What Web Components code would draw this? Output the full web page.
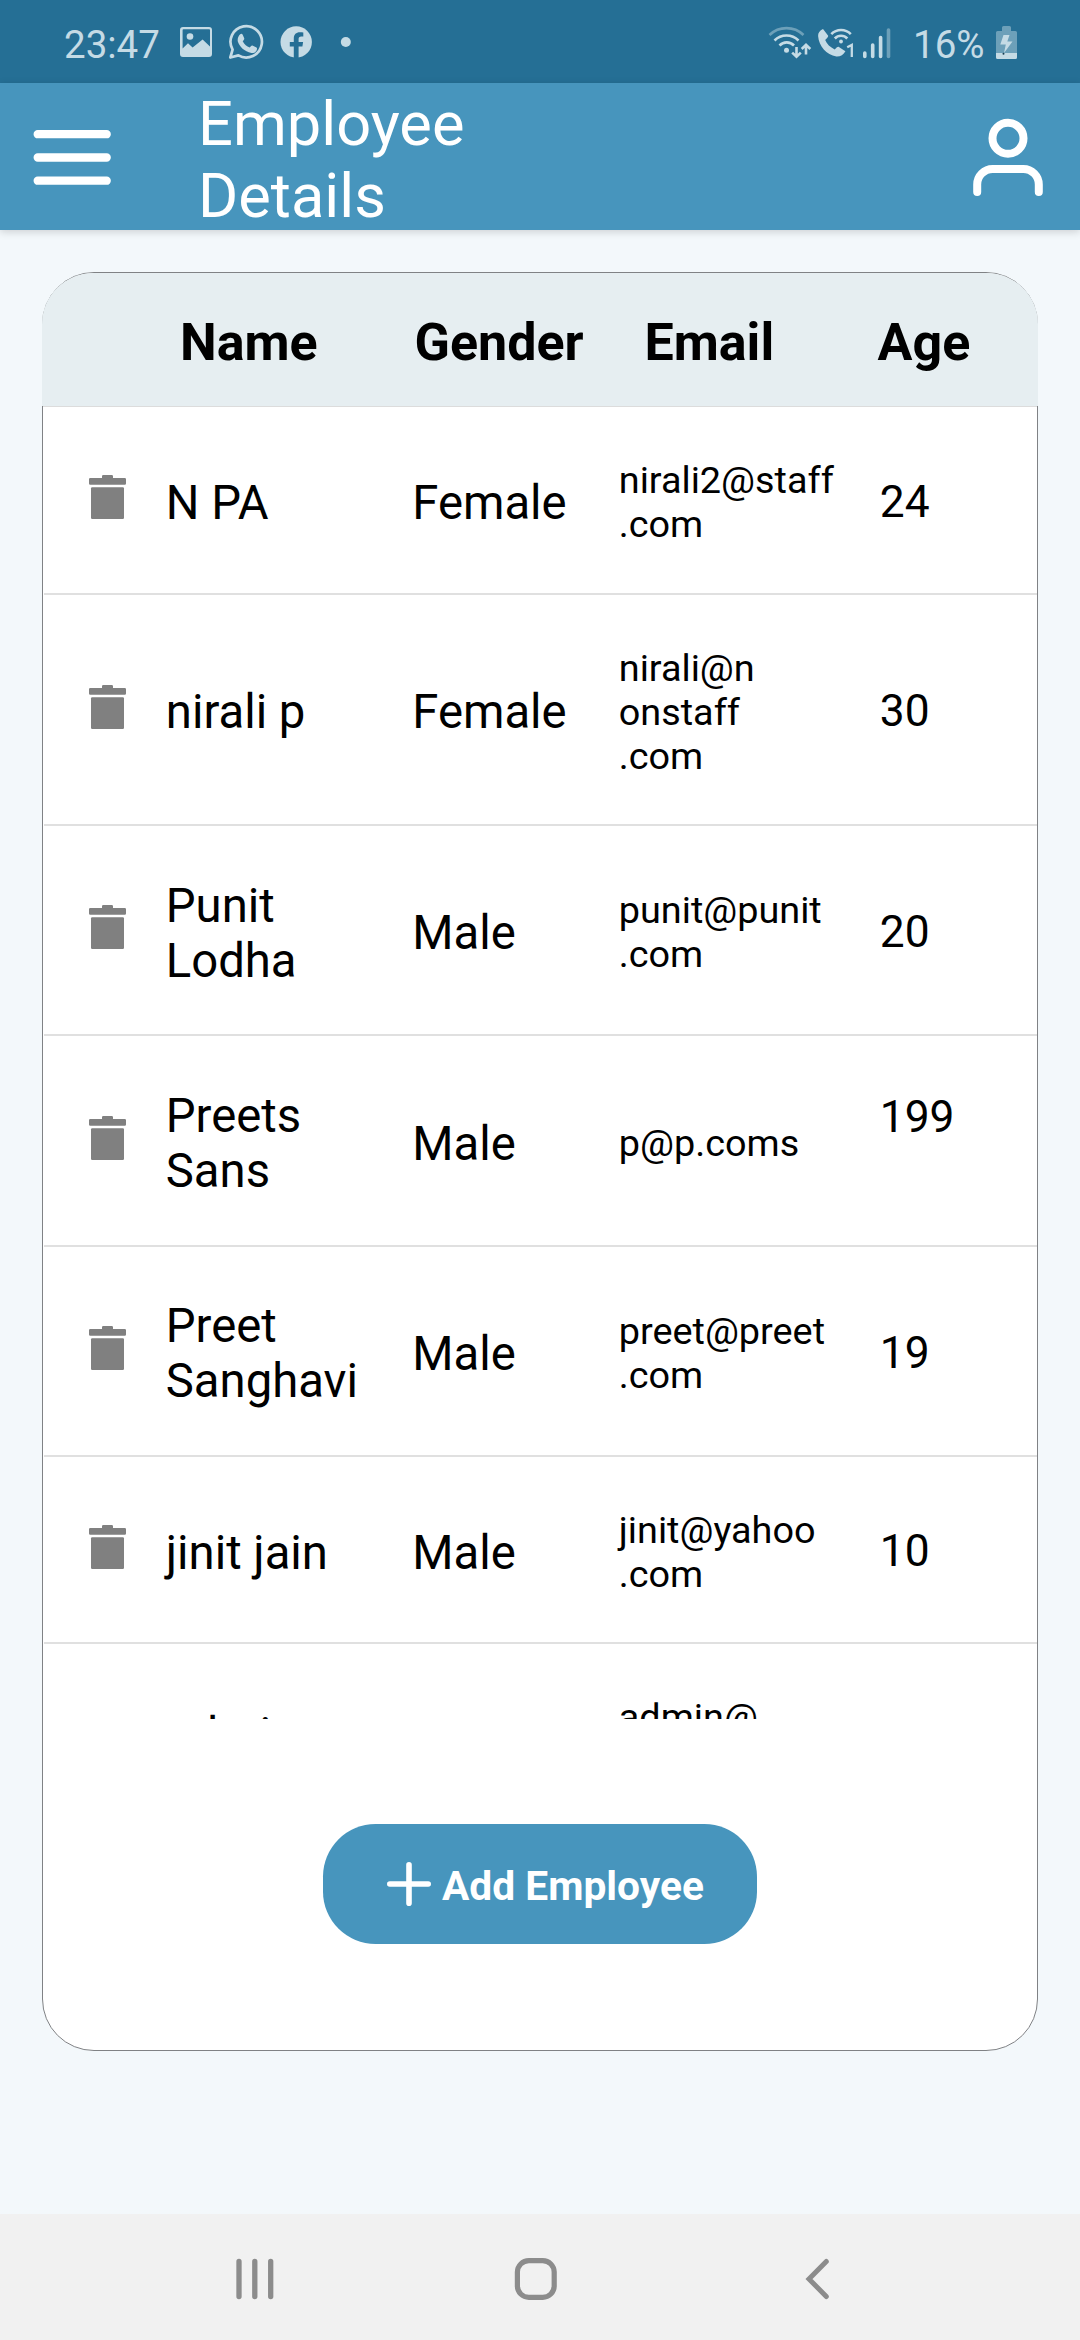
<!DOCTYPE html>
<html lang="en">
<head>
<meta charset="utf-8">
<title>Employee Details</title>
<style>
  html, body { margin: 0; background: #f3f8fb; }
  body { font-family: Roboto, "Liberation Sans", sans-serif; color: #000; }
</style>
</head>
<body>
<phone-screen>
  <status-bar slot="status" time="23:47" battery="16%"></status-bar>
  <app-bar slot="bar">Employee<br>Details</app-bar>
  <employee-card>
    <table-head slot="head"><span>Name</span><span>Gender</span><span>Email</span><span>Age</span></table-head>
    <employee-row><span slot="name">N PA</span><span slot="gender">Female</span><span slot="email">nirali2@staff<br>.com</span><span slot="age">24</span></employee-row>
    <employee-row><span slot="name">nirali p</span><span slot="gender">Female</span><span slot="email">nirali@n<br>onstaff<br>.com</span><span slot="age">30</span></employee-row>
    <employee-row><span slot="name">Punit<br>Lodha</span><span slot="gender">Male</span><span slot="email">punit@punit<br>.com</span><span slot="age">20</span></employee-row>
    <employee-row><span slot="name">Preets<br>Sans</span><span slot="gender">Male</span><span slot="email">p@p.coms</span><span slot="age">199<br>&nbsp;</span></employee-row>
    <employee-row><span slot="name">Preet<br>Sanghavi</span><span slot="gender">Male</span><span slot="email">preet@preet<br>.com</span><span slot="age">19</span></employee-row>
    <employee-row><span slot="name">jinit jain</span><span slot="gender">Male</span><span slot="email">jinit@yahoo<br>.com</span><span slot="age">10</span></employee-row>
    <employee-row><span slot="name">admin<br>&nbsp;</span><span slot="email">admin@<br>&nbsp;<br>&nbsp;</span></employee-row>
    <add-button slot="action">Add Employee</add-button>
  </employee-card>
  <nav-bar slot="nav"></nav-bar>
</phone-screen>
<script>
const define = (name, html) => {
  const tpl = document.createElement('template');
  tpl.innerHTML = html;
  customElements.define(name, class extends HTMLElement {
    constructor() {
      super();
      this.attachShadow({ mode: 'open' }).append(tpl.content.cloneNode(true));
    }
    connectedCallback() {
      this.shadowRoot.querySelectorAll('[data-attr]').forEach(el => {
        el.textContent = this.getAttribute(el.dataset.attr);
      });
    }
  });
};

define('phone-screen', `
<style>
  :host { display: flex; flex-direction: column; width: 1080px; height: 2340px; overflow: hidden; background: #f3f8fb; }
  main { flex: 1; min-height: 0; padding: 42px 42px 0; }
</style>
<slot name="status"></slot><slot name="bar"></slot>
<main><slot></slot></main>
<slot name="nav"></slot>`);

define('status-bar', `
<style>
  :host { display: flex; align-items: flex-start; height: 83px; flex: none; background: #256f95; color: #c5dbe5; font-size: 38.5px; line-height: 45px; box-sizing: border-box; padding: 22px 63px 0 64px; }
  .time { width: 116px; }
  .pct { width: 83px; }
  svg { display: block; flex: none; margin-top: -2px; }
  .gap { flex: 1; }
</style>
<span class="time" data-attr="time"></span>
<svg width="172" height="44" viewBox="180 20 172 44">
  <path fill="#c5dbe5" fill-rule="evenodd" d="M183 27h26a3 3 0 0 1 3 3v24a3 3 0 0 1-3 3h-26a3 3 0 0 1-3-3V30a3 3 0 0 1 3-3zM182.600 30v18.500l5.400-5.300 4.600 4.400 10-8 7.400 7V30a.8.8 0 0 0-.8-.8h-25.800a.8.8 0 0 0-.8.8z"/>
  <circle cx="190" cy="36.500" r="3.300" fill="#c5dbe5"/>
  <path d="M230.300 57.500 232.600 49.600A15.700 15.700 0 1 1 238.400 55.400Z" fill="none" stroke="#c5dbe5" stroke-width="2.700" stroke-linejoin="round"/>
  <path fill="#c5dbe5" d="M240.200 34.200c1-.9 2-.6 2.500.5l1.500 3.500c.3.800-.1 1.300-1.500 3 1.800 3.300 4 5 7 6.300 1.300-1.600 1.900-2.300 2.700-2l4.100 2c.7.400.6 1.500.2 2.700-.8 2.200-3.300 2.900-5.200 2.700-7.200-1.200-12-6.500-13.600-11.200-.8-3 .6-6 2.300-7.500z"/>
  <circle cx="296.200" cy="42" r="15.700" fill="#c5dbe5"/>
  <path fill="#256f95" d="M293.800 58V46.600h-4V42h4v-3.500c0-4 2.400-6.200 6-6.200 1.400 0 2.600.2 3.500.3v3.900h-2c-2 0-2.700 1.200-2.700 2.500v3h4.500l-.7 4.600h-3.800V58z"/>
  <circle cx="345.800" cy="42" r="5" fill="#c5dbe5"/>
</svg>
<span class="gap"></span>
<svg width="145" height="44" viewBox="768 20 145 44" fill="none" stroke="#c5dbe5" stroke-width="2.600">
  <path d="M769.500 35a24.500 24.500 0 0 1 34 0" opacity=".45"/>
  <path d="M774.500 40.500a17 17 0 0 1 24 0M779.500 45.500a10 10 0 0 1 14.500 0"/>
  <circle cx="786.500" cy="50.300" r="2.500" fill="#c5dbe5" stroke="none"/>
  <path d="M796.500 47v9M792.200 52.600l4.300 4.200 4.300-4.200M806 54.500v-9.500M801.700 49l4.300-4.200 4.300 4.200"/>
  <path fill="#c5dbe5" stroke="none" d="M823 29l5 6.500c.4.800.2 1.500-2.800 4.500 1.500 4 5 7.200 9.500 9.500 2.500-2.500 3.300-3 4.200-2.500l6.500 4.200c-2 3.500-5 5.500-9 5.300-10-1.500-17.500-10.500-18.300-20.500-.2-3 1.600-5.500 4.900-7z"/>
  <path d="M831.300 34.200a13.500 13.500 0 0 1 19.500 0M834.800 38.500a8.500 8.500 0 0 1 12.500 0"/>
  <circle cx="841" cy="41.500" r="1.900" fill="#c5dbe5" stroke="none"/>
  <path d="M847.200 47.300l4.600-2.400V57" stroke-width="2.300"/>
  <g stroke-width="3.600" stroke-linecap="round"><path d="M864.800 53v3.500M872.700 45v11.500M880.600 37.500v19"/><path d="M888.500 30v26.500" opacity=".45"/></g>
</svg>
<span class="pct" data-attr="battery"></span>
<svg width="21" height="44" viewBox="996 20 21 44" fill="#c5dbe5">
  <path opacity=".45" d="M1002 31v-3.500a1.500 1.500 0 0 1 1.500-1.500h6a1.500 1.500 0 0 1 1.500 1.500V31h4.500a1.500 1.500 0 0 1 1.500 1.500V53h-21V32.500a1.500 1.500 0 0 1 1.500-1.500z"/>
  <path d="M996 53h21v4.500a1.500 1.500 0 0 1-1.500 1.500h-18a1.500 1.500 0 0 1-1.500-1.500zM1003.500 35h6l-2.200 6.500h5.200L1004 53l1.800-8.500h-5.500z"/>
  <circle cx="1003.500" cy="53.700" r="1" fill="#183e52"/>
</svg>`);

define('app-bar', `
<style>
  :host { display: flex; height: 147px; flex: none; background: #4795bd; color: #fff; box-shadow: 0 2px 8px rgba(0,0,0,.16); box-sizing: border-box; padding: 0 36px 0 32px; align-items: center; }
  h1 { margin: 7px 0 0 86px; font-weight: 400; font-size: 61.4px; line-height: 72px; flex: 1; }
  svg { display: block; flex: none; }
</style>
<svg width="80" height="60" viewBox="32 127 80 60" fill="none" stroke="#fff" stroke-width="8.300" stroke-linecap="round"><path d="M37.700 134.200h69M37.700 157.500h69M37.700 180.700h69"/></svg>
<h1><slot></slot></h1>
<svg width="72" height="80" viewBox="972 117 72 80" fill="none" stroke="#fff" stroke-width="8" stroke-linecap="round"><circle cx="1008" cy="138.300" r="15.500"/><path d="M977.200 192v-7.500a15.500 15.500 0 0 1 15.500-15.500h30.600a15.500 15.500 0 0 1 15.500 15.500V192"/></svg>`);

define('employee-card', `
<style>
  :host { display: flex; flex-direction: column; width: 996px; height: 1779px; box-sizing: border-box; border: 1px solid #808285; border-radius: 52px; background: #fff; }
  .list { height: 1313px; overflow: hidden; flex: none; box-sizing: border-box; border-top: 1px solid #dcdcdc; }
  .action { display: flex; justify-content: center; padding-top: 105px; }
</style>
<slot name="head"></slot>
<div class="list"><slot></slot></div>
<div class="action"><slot name="action"></slot></div>`);

define('table-head', `
<style>
  :host { display: grid; grid-template-columns: 234.500px 230px 233px 1fr; align-items: start; margin: 0 -1px; height: 133px; flex: none; box-sizing: border-box; padding: 39px 0 0 138px; background: #e6eef1; border-radius: 51px 51px 0 0; font-weight: 700; font-size: 52px; line-height: 62px; }
</style>
<slot></slot>`);

define('trash-icon', `
<style>:host { display: block; width: 37px; height: 44px; } svg { display: block; }</style>
<svg width="37" height="44" viewBox="0 0 37 44" fill="#808080"><path d="M13 3V1.200Q13 0 14.200 0h8.600Q24 0 24 1.200V3h11.800Q37 3 37 4.200v4.300Q37 9.700 35.800 9.700H1.200Q0 9.700 0 8.500V4.200Q0 3 1.200 3z"/><rect x="2" y="12.300" width="33" height="31.700" rx="1.200"/></svg>`);

define('employee-row', `
<style>
  :host { display: grid; grid-template-columns: 77px 246.500px 206.500px 261px 1fr; align-items: center; margin-left: 1px; padding: 51px 0 46.600px 44.800px; box-sizing: border-box; border-bottom: 2px solid #e0e0e0; font-size: 47.250px; line-height: 55.300px; }
  trash-icon { margin-bottom: 10px; }
  .text { margin: 1.500px 0 -1.500px; }
  .email { font-size: 37.800px; line-height: 44px; white-space: nowrap; }
  .age { margin: .5px 0 -.5px; font-size: 44.300px; line-height: 51.600px; }
</style>
<trash-icon></trash-icon>
<div class="text"><slot name="name"></slot></div>
<div class="text"><slot name="gender"></slot></div>
<div class="email"><slot name="email"></slot></div>
<div class="age"><slot name="age"></slot></div>`);

define('add-button', `
<style>
  :host { display: flex; align-items: center; width: 434px; height: 120px; box-sizing: border-box; padding-left: 64px; border-radius: 52.500px; background: #4795bd; color: #fff; font-weight: 700; font-size: 40.700px; line-height: 50px; white-space: nowrap; }
  svg { display: block; flex: none; margin-right: 11px; }
  span { padding-top: 3px; }
</style>
<svg width="44" height="44" viewBox="0 0 44 44" fill="none" stroke="#fff" stroke-width="5.600" stroke-linecap="round"><path d="M22 2.800v38.400M2.800 22h38.400"/></svg>
<span><slot></slot></span>`);

define('nav-bar', `
<style>
  :host { display: flex; align-items: center; height: 126px; flex: none; box-sizing: border-box; padding: 4px 0 0 235px; background: #f1f1f1; }
  svg { display: block; flex: none; }
  .home { margin: 0 247px 0 239px; }
</style>
<svg width="40" height="44" viewBox="235 2257 40 44" stroke="#8c8c8c" stroke-width="5.300" stroke-linecap="round"><path d="M239 2261.500v35M254.800 2261.500v35M270.700 2261.500v35"/></svg>
<svg class="home" width="44" height="44" viewBox="514 2257 44 44" fill="none" stroke="#8c8c8c" stroke-width="5.200"><rect x="517.400" y="2260.600" width="36.800" height="36.800" rx="11.500"/></svg>
<svg width="26" height="44" viewBox="805 2257 26 44" fill="none" stroke="#8c8c8c" stroke-width="5" stroke-linecap="round"><path d="M826.300 2261.500 809 2279l17.300 17.500"/></svg>`);
</script>
</body>
</html>
